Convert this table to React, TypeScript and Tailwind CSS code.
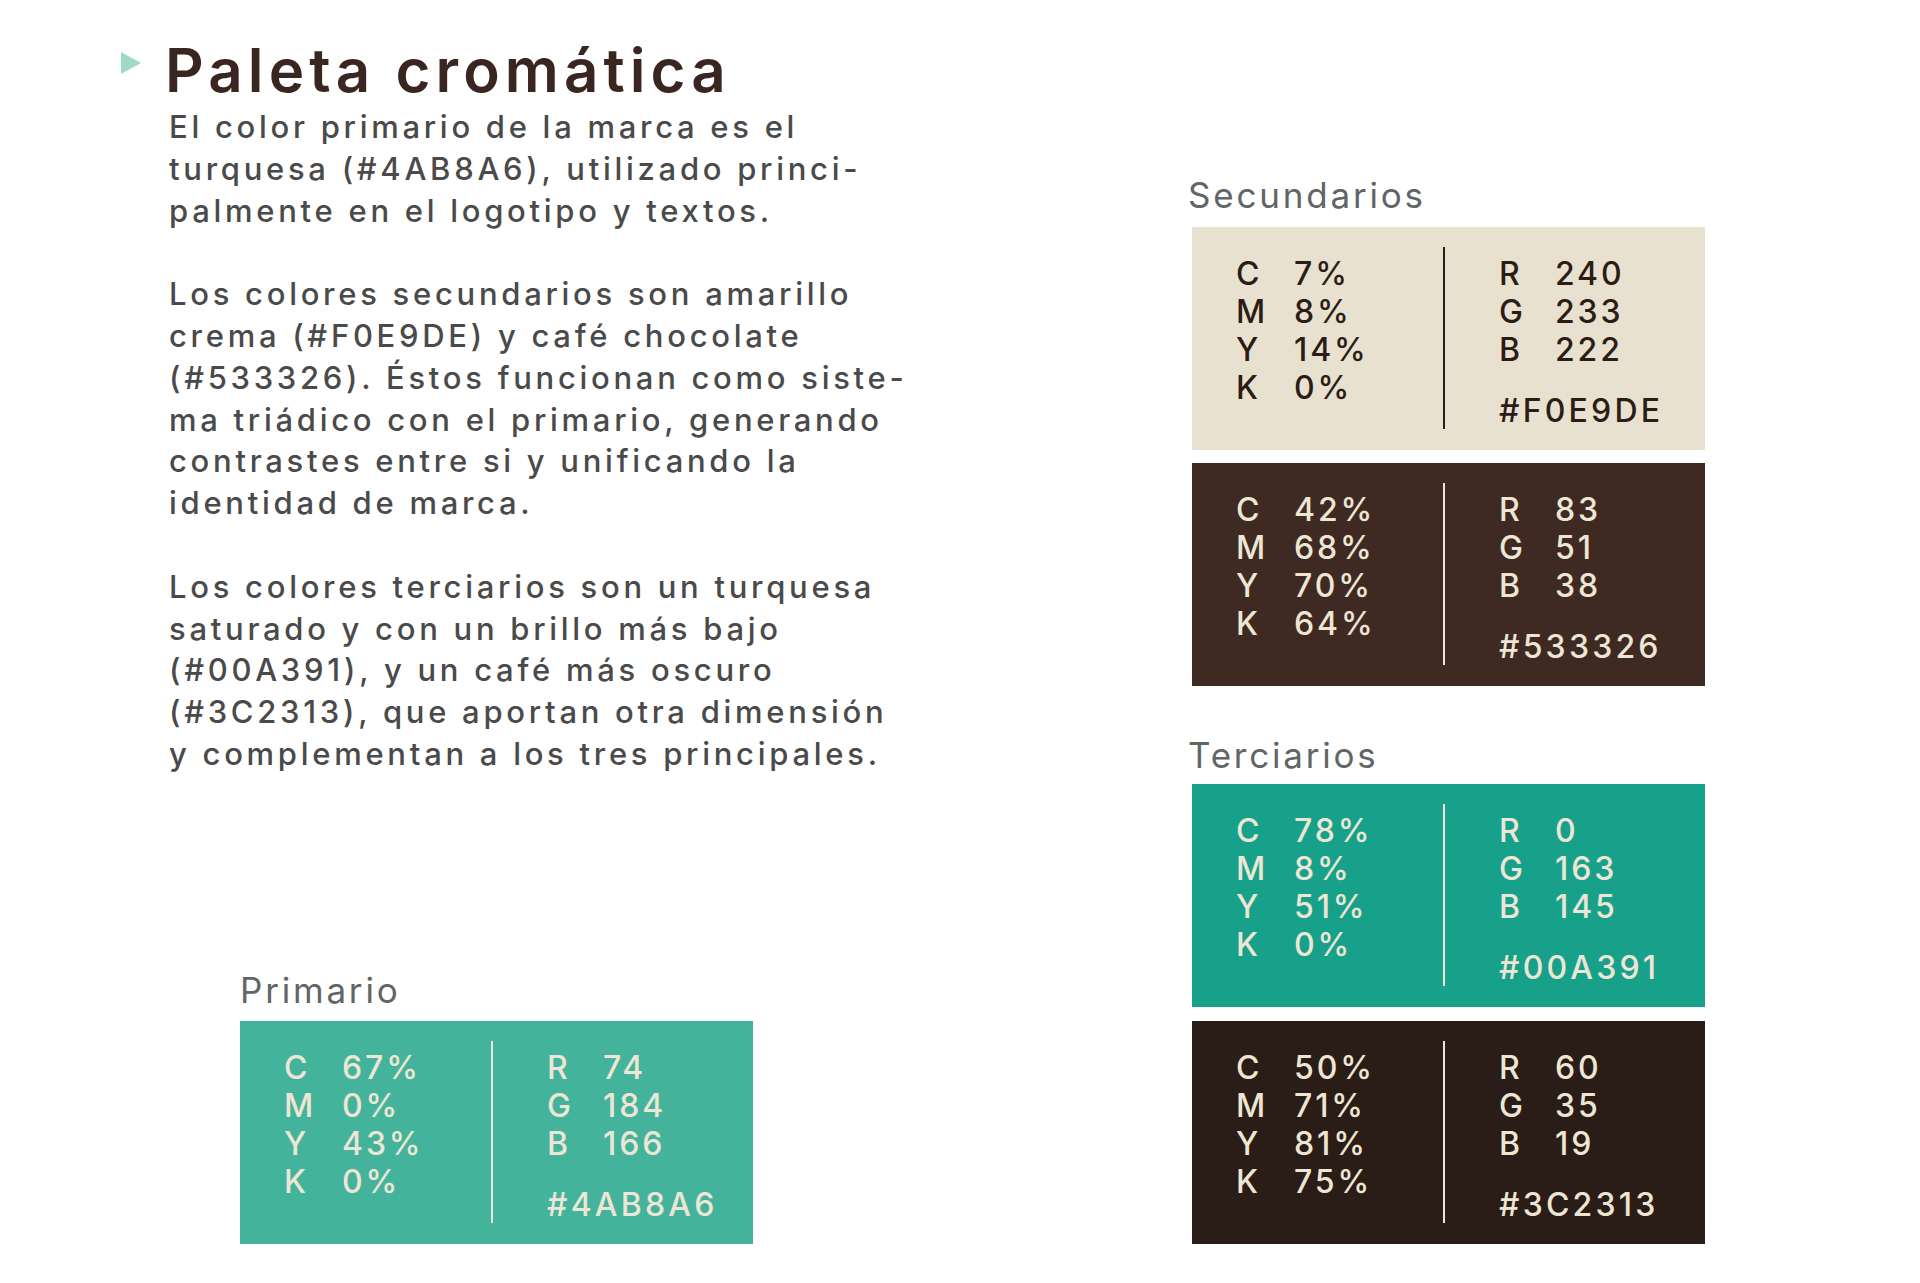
import React from "react";

type Swatch = {
  bg: string;
  fg: string;
  line: string;
  cmyk: [string, string, string, string];
  rgb: [string, string, string];
  hex: string;
};

function SwatchBox({ s }: { s: Swatch }) {
  return (
    <div className={`flex h-[223px] w-[513px] shrink-0 ${s.bg} ${s.fg}`}>
      <div className="w-[251px] shrink-0 pl-[44px] pt-[28px]">
        <div className="grid grid-cols-[58px_auto] text-[32px] font-medium leading-[38px] tracking-[0.09em]">
          <span>C</span>
          <span>{s.cmyk[0]}</span>
          <span>M</span>
          <span>{s.cmyk[1]}</span>
          <span>Y</span>
          <span>{s.cmyk[2]}</span>
          <span>K</span>
          <span>{s.cmyk[3]}</span>
        </div>
      </div>
      <div className={`mt-[20px] h-[182px] w-[2px] shrink-0 ${s.line}`} />
      <div className="flex-1 pl-[54px] pt-[28px] text-[32px] font-medium leading-[38px] tracking-[0.09em]">
        <div className="grid grid-cols-[56px_auto]">
          <span>R</span>
          <span>{s.rgb[0]}</span>
          <span>G</span>
          <span>{s.rgb[1]}</span>
          <span>B</span>
          <span>{s.rgb[2]}</span>
        </div>
        <div className="mt-[23px] tracking-[0.1em] whitespace-nowrap">{s.hex}</div>
      </div>
    </div>
  );
}

const primario: Swatch = {
  bg: "bg-[#44B39B]",
  fg: "text-[#EEE6D4]",
  line: "bg-[#EEE6D4]",
  cmyk: ["67%", "0%", "43%", "0%"],
  rgb: ["74", "184", "166"],
  hex: "#4AB8A6",
};

const sec1: Swatch = {
  bg: "bg-[#E9E1CF]",
  fg: "text-[#2B1D16]",
  line: "bg-[#2B1D16]",
  cmyk: ["7%", "8%", "14%", "0%"],
  rgb: ["240", "233", "222"],
  hex: "#F0E9DE",
};

const sec2: Swatch = {
  bg: "bg-[#3E2A23]",
  fg: "text-[#EEE6D4]",
  line: "bg-[#EEE6D4]",
  cmyk: ["42%", "68%", "70%", "64%"],
  rgb: ["83", "51", "38"],
  hex: "#533326",
};

const ter1: Swatch = {
  bg: "bg-[#17A08A]",
  fg: "text-[#EEE6D4]",
  line: "bg-[#EEE6D4]",
  cmyk: ["78%", "8%", "51%", "0%"],
  rgb: ["0", "163", "145"],
  hex: "#00A391",
};

const ter2: Swatch = {
  bg: "bg-[#2A1C16]",
  fg: "text-[#EEE6D4]",
  line: "bg-[#EEE6D4]",
  cmyk: ["50%", "71%", "81%", "75%"],
  rgb: ["60", "35", "19"],
  hex: "#3C2313",
};

function Label({ children }: { children: React.ReactNode }) {
  return (
    <div className="h-[35px] text-[35px] leading-[35px] tracking-[0.08em] text-[#616565] whitespace-nowrap">
      {children}
    </div>
  );
}

export default function App() {
  return (
    <div className="flex h-[1283px] w-[1920px] bg-white pt-[40px] pb-[39px] font-['Inter'] antialiased">
      {/* Left column */}
      <div className="flex flex-1 flex-col pl-[121px]">
        <div className="flex items-start">
          <svg width="20" height="22" viewBox="0 0 20 22" className="mt-[12px] shrink-0">
            <polygon points="0,0 20,11 0,22" fill="#9FD9CB" />
          </svg>
          <h1 className="ml-[24px] text-[60px] font-semibold leading-[60px] tracking-[0.085em] text-[#3A2620] whitespace-nowrap">
            Paleta cromática
          </h1>
        </div>
        <div className="ml-[48px] mt-[6px] text-[31px] font-[450] leading-[41.8px] tracking-[0.12em] text-[#4A4A4A] whitespace-nowrap">
          <p>
            El color primario de la marca es el
            <br />
            turquesa (#4AB8A6), utilizado princi-
            <br />
            palmente en el logotipo y textos.
          </p>
          <p className="mt-[41.8px]">
            Los colores secundarios son amarillo
            <br />
            crema (#F0E9DE) y café chocolate
            <br />
            (#533326). Éstos funcionan como siste-
            <br />
            ma triádico con el primario, generando
            <br />
            contrastes entre si y unificando la
            <br />
            identidad de marca.
          </p>
          <p className="mt-[41.8px]">
            Los colores terciarios son un turquesa
            <br />
            saturado y con un brillo más bajo
            <br />
            (#00A391), y un café más oscuro
            <br />
            (#3C2313), que aportan otra dimensión
            <br />
            y complementan a los tres principales.
          </p>
        </div>
        <div className="mt-auto ml-[119px] flex flex-col">
          <Label>Primario</Label>
          <div className="mt-[13px]">
            <SwatchBox s={primario} />
          </div>
        </div>
      </div>

      {/* Right column */}
      <div className="mr-[215px] flex w-[513px] shrink-0 flex-col">
        <div className="mt-[138px] -ml-[4px]">
          <Label>Secundarios</Label>
        </div>
        <div className="mt-[14px] flex flex-col gap-[13px]">
          <SwatchBox s={sec1} />
          <SwatchBox s={sec2} />
        </div>
        <div className="mt-[52px] -ml-[4px]">
          <Label>Terciarios</Label>
        </div>
        <div className="mt-[11px] flex flex-col gap-[14px]">
          <SwatchBox s={ter1} />
          <SwatchBox s={ter2} />
        </div>
      </div>
    </div>
  );
}
